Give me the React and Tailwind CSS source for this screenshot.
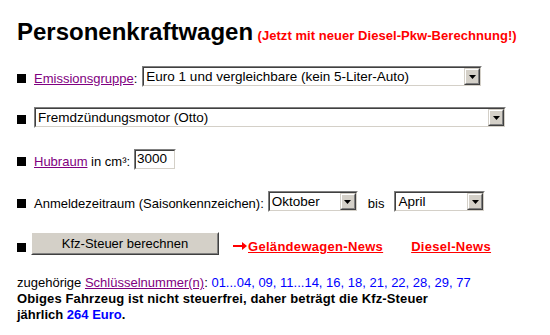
import React from 'react'

const font = { fontFamily: '"Liberation Sans", Arial, sans-serif' }

function Bullet({ className = '' }) {
  return <div className={`w-[9px] h-[9px] bg-black shrink-0 ${className}`} />
}

// Windows classic drop-down
function Select({ width, value }) {
  return (
    <div
      className="h-[21px] border border-t-[#808080] border-l-[#808080] border-b-white border-r-white shrink-0"
      style={{ width }}
    >
      <div className="h-full flex border border-t-[#404040] border-l-[#404040] border-b-[#d4d0c8] border-r-[#d4d0c8] bg-white">
        <div className="flex-1 pl-[2px] text-[13.5px] leading-[17px] text-black whitespace-nowrap overflow-hidden">
          {value}
        </div>
        <div className="w-[16px] h-[17px] border border-t-[#d4d0c8] border-l-[#d4d0c8] border-b-[#404040] border-r-[#404040] bg-[#d4d0c8]">
          <div className="w-full h-full border border-t-white border-l-white border-b-[#808080] border-r-[#808080] flex items-center justify-center">
            <svg width="7" height="4" viewBox="0 0 7 4">
              <path d="M0 0H7L3.5 4Z" fill="#000" />
            </svg>
          </div>
        </div>
      </div>
    </div>
  )
}

function App() {
  return (
    <div className="w-[550px] h-[335px] bg-white text-black pl-[17px] overflow-hidden" style={font}>
      {/* Title */}
      <div className="mt-[18px] h-[28px] leading-[28px] whitespace-nowrap">
        <span className="text-[24px] font-bold">Personenkraftwagen</span>{' '}
        <span className="text-[13px] leading-[16px] font-bold text-[#ff0000] tracking-[0.05px]">
          (Jetzt mit neuer Diesel-Pkw-Berechnung!)
        </span>
      </div>

      {/* Emissionsgruppe */}
      <div className="mt-[20px] h-[21px] flex items-end text-[13px] leading-[16px]">
        <Bullet className="mb-[4px]" />
        <span className="ml-[8px] whitespace-nowrap">
          <a className="text-[#800080] underline">Emissionsgruppe</a>:
        </span>
        <div className="ml-[5px] self-start">
          <Select width={340} value="Euro 1 und vergleichbare (kein 5-Liter-Auto)" />
        </div>
      </div>

      {/* Motor */}
      <div className="mt-[20px] h-[21px] flex items-end text-[13px] leading-[16px]">
        <Bullet className="mb-[4px]" />
        <div className="ml-[8px] self-start">
          <Select width={472} value="Fremdzündungsmotor (Otto)" />
        </div>
      </div>

      {/* Hubraum */}
      <div className="mt-[21px] h-[21px] flex items-end text-[13px] leading-[16px]">
        <Bullet className="mb-[4px]" />
        <span className="ml-[8px] whitespace-nowrap">
          <a className="text-[#800080] underline">Hubraum</a> in cm³:
        </span>
        <div className="ml-[4px] self-start w-[42px] h-[21px] border border-t-[#808080] border-l-[#808080] border-b-white border-r-white">
          <div className="h-full border border-t-[#404040] border-l-[#404040] border-b-[#d4d0c8] border-r-[#d4d0c8] bg-white pl-[1px] text-[13.5px] leading-[16px]">
            3000
          </div>
        </div>
      </div>

      {/* Anmeldezeitraum */}
      <div className="mt-[21px] h-[21px] flex items-end text-[13px] leading-[16px]">
        <Bullet className="mb-[4px]" />
        <span className="ml-[8px] whitespace-nowrap">Anmeldezeitraum (Saisonkennzeichen):</span>
        <div className="ml-[4px] self-start">
          <Select width={90} value="Oktober" />
        </div>
        <span className="ml-[10px] mr-[10px]">bis</span>
        <div className="self-start">
          <Select width={91} value="April" />
        </div>
      </div>

      {/* Berechnen */}
      <div className="mt-[20px] h-[23px] flex items-end text-[13px] leading-[16px]">
        <Bullet className="mb-[3px]" />
        <button className="ml-[5px] self-start w-[188px] h-[23px] border border-t-white border-l-white border-b-[#404040] border-r-[#404040] bg-[#d4d0c8]">
          <div className="h-full border border-t-[#d4d0c8] border-l-[#d4d0c8] border-b-[#808080] border-r-[#808080] flex items-center justify-center text-[13px]">
            Kfz-Steuer berechnen
          </div>
        </button>
        <svg className="ml-[14px] mb-[5px]" width="14" height="8" viewBox="0 0 14 8">
          <path d="M0 3H9V0L14 4L9 8V5H0Z" fill="#ff0000" />
        </svg>
        <a className="ml-[1px] font-bold text-[#ff0000] underline whitespace-nowrap tracking-[0.3px]">
          Geländewagen-News
        </a>
        <a className="ml-[28px] font-bold text-[#ff0000] underline whitespace-nowrap tracking-[0.3px]">
          Diesel-News
        </a>
      </div>

      {/* Ergebnis */}
      <div className="mt-[20px] text-[13px] leading-[16px] whitespace-nowrap">
        <div>
          zugehörige <a className="text-[#800080] underline">Schlüsselnummer(n)</a>:{' '}
          <span className="text-[#0000ff]">01...04, 09, 11...14, 16, 18, 21, 22, 28, 29, 77</span>
        </div>
        <div className="font-bold tracking-[0.12px]">
          Obiges Fahrzeug ist nicht steuerfrei, daher beträgt die Kfz-Steuer
        </div>
        <div className="font-bold">
          jährlich <span className="text-[#0000ff]">264 Euro</span>.
        </div>
      </div>
    </div>
  )
}

export default App
